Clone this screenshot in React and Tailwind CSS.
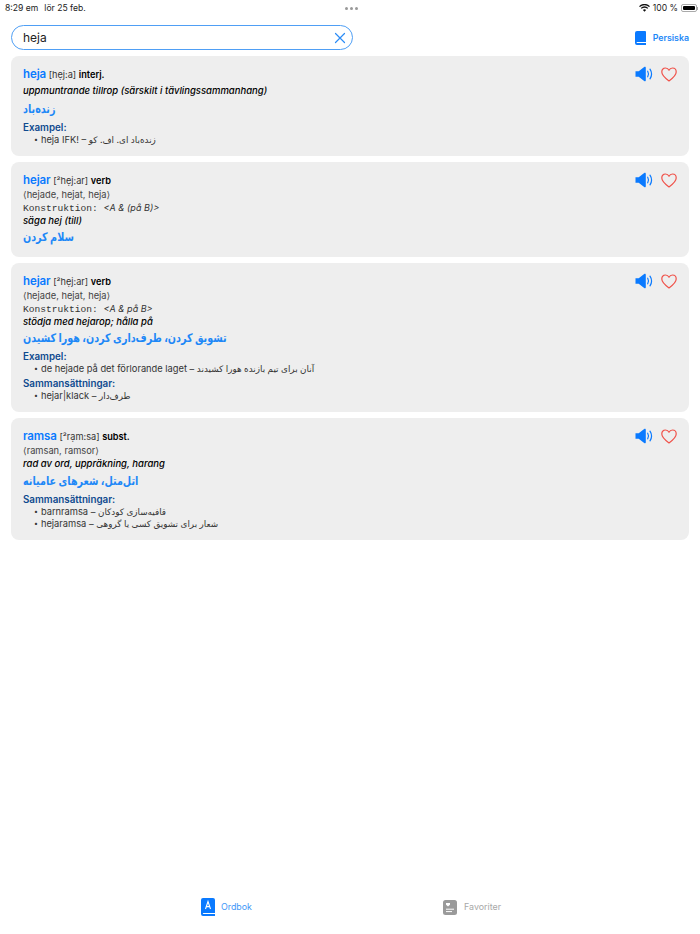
const FONT = "font-['Inter','DejaVu_Sans','Noto_Sans',sans-serif]";

const Speaker = () => (
  <svg width="18" height="16" viewBox="0 0 18 16" fill="none">
    <path d="M0.5 5.2h3.2L9.2 1c.8-.6 1.6-.2 1.6.8v12.4c0 1-.8 1.4-1.6.8L3.7 10.8H0.5z" fill="#0a7aff" />
    <path d="M12.7 5.2c1 1.7 1 3.9 0 5.6" stroke="#0a7aff" strokeWidth="1.2" strokeLinecap="round" />
    <path d="M15 3.2c1.9 2.9 1.9 6.7 0 9.6" stroke="#0a7aff" strokeWidth="1.2" strokeLinecap="round" />
  </svg>
);

const Heart = () => (
  <svg width="16" height="15" viewBox="0 0 16 15" fill="none">
    <path
      d="M8 13.9C3.6 10.6 0.8 8 0.8 4.9 0.8 2.6 2.5 1 4.5 1 6 1 7.3 1.8 8 3.2 8.7 1.8 10 1 11.5 1c2 0 3.7 1.6 3.7 3.9 0 3.1-2.8 5.7-7.2 9z"
      stroke="#f0524a"
      strokeWidth="1.2"
      strokeLinejoin="round"
    />
  </svg>
);

const Head = ({ word, phon, cls }) => (
  <div className="h-[18px] leading-[18px] text-[9.2px] text-[#333]">
    <span className="text-[11.5px] font-semibold tracking-[-0.1px] text-[#0a7aff]">{word}</span>{" "}
    <span>{phon}</span>{" "}
    <span className="font-semibold text-black">{cls}</span>
  </div>
);

const Forms = ({ children }) => (
  <div className="h-[12px] leading-[12px] text-[9.3px] text-[#444]">{children}</div>
);

const Konstruktion = ({ children }) => (
  <div className="h-[13px] leading-[13px] text-[9px] text-[#333]">
    <span className="font-['Liberation_Mono',monospace] text-[9.6px]">Konstruktion: </span>
    <i>{children}</i>
  </div>
);

const Def = ({ h, children }) => (
  <div className={`${h} flex items-center pt-[1px] text-[9.5px] font-medium italic text-black`}>{children}</div>
);

const Persian = ({ children }) => (
  <div className="h-[20px] leading-[20px] text-[12px] font-semibold text-[#1e88f7]">
    <span dir="rtl" className="inline-block origin-left scale-x-[0.8]">{children}</span>
  </div>
);

const Label = ({ children }) => (
  <div className="mt-[3px] h-[12px] leading-[12px] text-[9.8px] font-semibold text-[#0f4a8f]">{children}</div>
);

const Item = ({ sv, fa }) => (
  <div className="flex h-[12px] items-center pl-[11px] text-[9.3px] leading-[12px] text-[#333]">
    <span className="mr-[3px] text-[7px]">•</span>
    <span className="whitespace-pre">{sv} – </span>
    <span dir="rtl" className="text-[8.8px]">{fa}</span>
  </div>
);

const Card = ({ children }) => (
  <div className="flex justify-between rounded-lg bg-[#eeeeee] pb-[10px] pl-[12px] pr-[12px] pt-[9px]">
    <div>{children}</div>
    <div className="flex h-[18px] items-center gap-[8px]">
      <Speaker />
      <Heart />
    </div>
  </div>
);

export default function App() {
  return (
    <div className={`flex h-[934px] w-[700px] flex-col bg-white ${FONT}`}>
      <div className="flex h-[14px] items-center justify-between pl-[5px] pr-[2px] pt-[2px] text-[8.6px] text-[#222]">
        <div className="flex w-[200px] gap-[6px]">
          <span>8:29 em</span>
          <span>lör 25 feb.</span>
        </div>
        <div className="flex gap-[2px]">
          <span className="h-[3px] w-[3px] rounded-full bg-[#999]" />
          <span className="h-[3px] w-[3px] rounded-full bg-[#999]" />
          <span className="h-[3px] w-[3px] rounded-full bg-[#999]" />
        </div>
        <div className="flex w-[200px] items-center justify-end gap-[3px]">
          <svg width="11" height="8" viewBox="0 0 11 8" fill="none">
            <path d="M.5 2.6a7 7 0 0 1 10 0M2.2 4.4a4.6 4.6 0 0 1 6.6 0" stroke="#111" strokeWidth="1.3" />
            <path d="M3.9 6a2.2 2.2 0 0 1 3.2 0L5.5 7.8z" fill="#111" />
          </svg>
          <span>100 %</span>
          <span className="flex items-center">
            <span className="flex h-[8px] w-[16px] items-center rounded-[2px] border border-[#aaa] p-[1px]">
              <span className="h-full w-full rounded-[1px] bg-black" />
            </span>
            <span className="h-[3px] w-[1px] bg-[#aaa]" />
          </span>
        </div>
      </div>

      <div className="flex items-center justify-between pb-[6px] pl-[11px] pr-[11px] pt-[11px]">
        <div className="flex h-[25px] w-[342px] items-center justify-between rounded-full border border-[#4f9ff5] pl-[11px] pr-[6px] text-[12px] text-[#222]">
          <span>heja</span>
          <svg width="12" height="12" viewBox="0 0 12 12" fill="none">
            <path d="M1.5 1.5l9 9M10.5 1.5l-9 9" stroke="#2b8cf6" strokeWidth="1.2" strokeLinecap="round" />
          </svg>
        </div>
        <div className="flex items-center gap-[7px] text-[8.8px] font-semibold text-[#1e88f7]">
          <svg width="11" height="14" viewBox="0 0 11 14" fill="none">
            <path d="M2 0h8a1 1 0 0 1 1 1v10H2.2c-.7 0-.9 1.1 0 1.1H11V14H2a2 2 0 0 1-2-2V2a2 2 0 0 1 2-2z" fill="#0a7aff" />
          </svg>
          <span>Persiska</span>
        </div>
      </div>

      <div className="flex flex-col gap-[6px] px-[11px]">
        <Card>
          <Head word="heja" phon="[hẹj:a]" cls="interj." />
          <Def h="h-[16px]">uppmuntrande tillrop (särskilt i tävlingssammanhang)</Def>
          <Persian>زنده‌باد</Persian>
          <Label>Exampel:</Label>
          <Item sv="heja IFK!" fa="زنده‌باد ای. اف. کو" />
        </Card>

        <Card>
          <Head word="hejar" phon="[²hẹj:ar]" cls="verb" />
          <Forms>⟨hejade, hejat, heja⟩</Forms>
          <Konstruktion>&lt;A &amp; (på B)&gt;</Konstruktion>
          <Def h="h-[13px]">säga hej (till)</Def>
          <Persian>سلام کردن</Persian>
        </Card>

        <Card>
          <Head word="hejar" phon="[²hẹj:ar]" cls="verb" />
          <Forms>⟨hejade, hejat, heja⟩</Forms>
          <Konstruktion>&lt;A &amp; på B&gt;</Konstruktion>
          <Def h="h-[13px]">stödja med hejarop; hålla på</Def>
          <Persian>تشویق کردن، طرف‌داری کردن، هورا کشیدن</Persian>
          <Label>Exampel:</Label>
          <Item sv="de hejade på det förlorande laget" fa="آنان برای تیم بازنده هورا کشیدند" />
          <Label>Sammansättningar:</Label>
          <Item sv="hejar|klack" fa="طرف‌دار" />
        </Card>

        <Card>
          <Head word="ramsa" phon="[²rạm:sa]" cls="subst." />
          <Forms>⟨ramsan, ramsor⟩</Forms>
          <Def h="h-[14px]">rad av ord, uppräkning, harang</Def>
          <Persian>اتل‌متل، شعرهای عامیانه</Persian>
          <Label>Sammansättningar:</Label>
          <Item sv="barnramsa" fa="قافیه‌سازی کودکان" />
          <Item sv="hejaramsa" fa="شعار برای تشویق کسی یا گروهی" />
        </Card>
      </div>

      <div className="flex-1" />

      <div className="flex h-[49px] items-start pt-[13px] text-[8.9px]">
        <div className="flex h-[18px] w-[350px] items-center justify-end gap-[6px] pr-[98px] text-[#3f97f7]">
          <svg width="14" height="18" viewBox="0 0 14 18" fill="none">
            <path d="M2 0h10a2 2 0 0 1 2 2v13H2.4c-.8 0-.8 1 0 1H14v2H2a2 2 0 0 1-2-2V2a2 2 0 0 1 2-2z" fill="#0a7aff" />
            <path d="M4.5 11L7 3.5 9.5 11M5.3 8.6h3.4" stroke="#fff" strokeWidth="1.1" />
          </svg>
          <span>Ordbok</span>
        </div>
        <div className="flex h-[18px] w-[350px] items-center gap-[7px] pl-[93px] text-[#a8a8a8]">
          <svg width="14" height="15" viewBox="0 0 14 15" fill="none">
            <rect width="14" height="15" rx="2.5" fill="#9a9a9a" />
            <path d="M3 3h4v1.8L5 6.5 3 4.8z" fill="#fff" />
            <path d="M3 9.2h8M3 11.6h6" stroke="#fff" strokeWidth="1" />
          </svg>
          <span>Favoriter</span>
        </div>
      </div>
    </div>
  );
}
